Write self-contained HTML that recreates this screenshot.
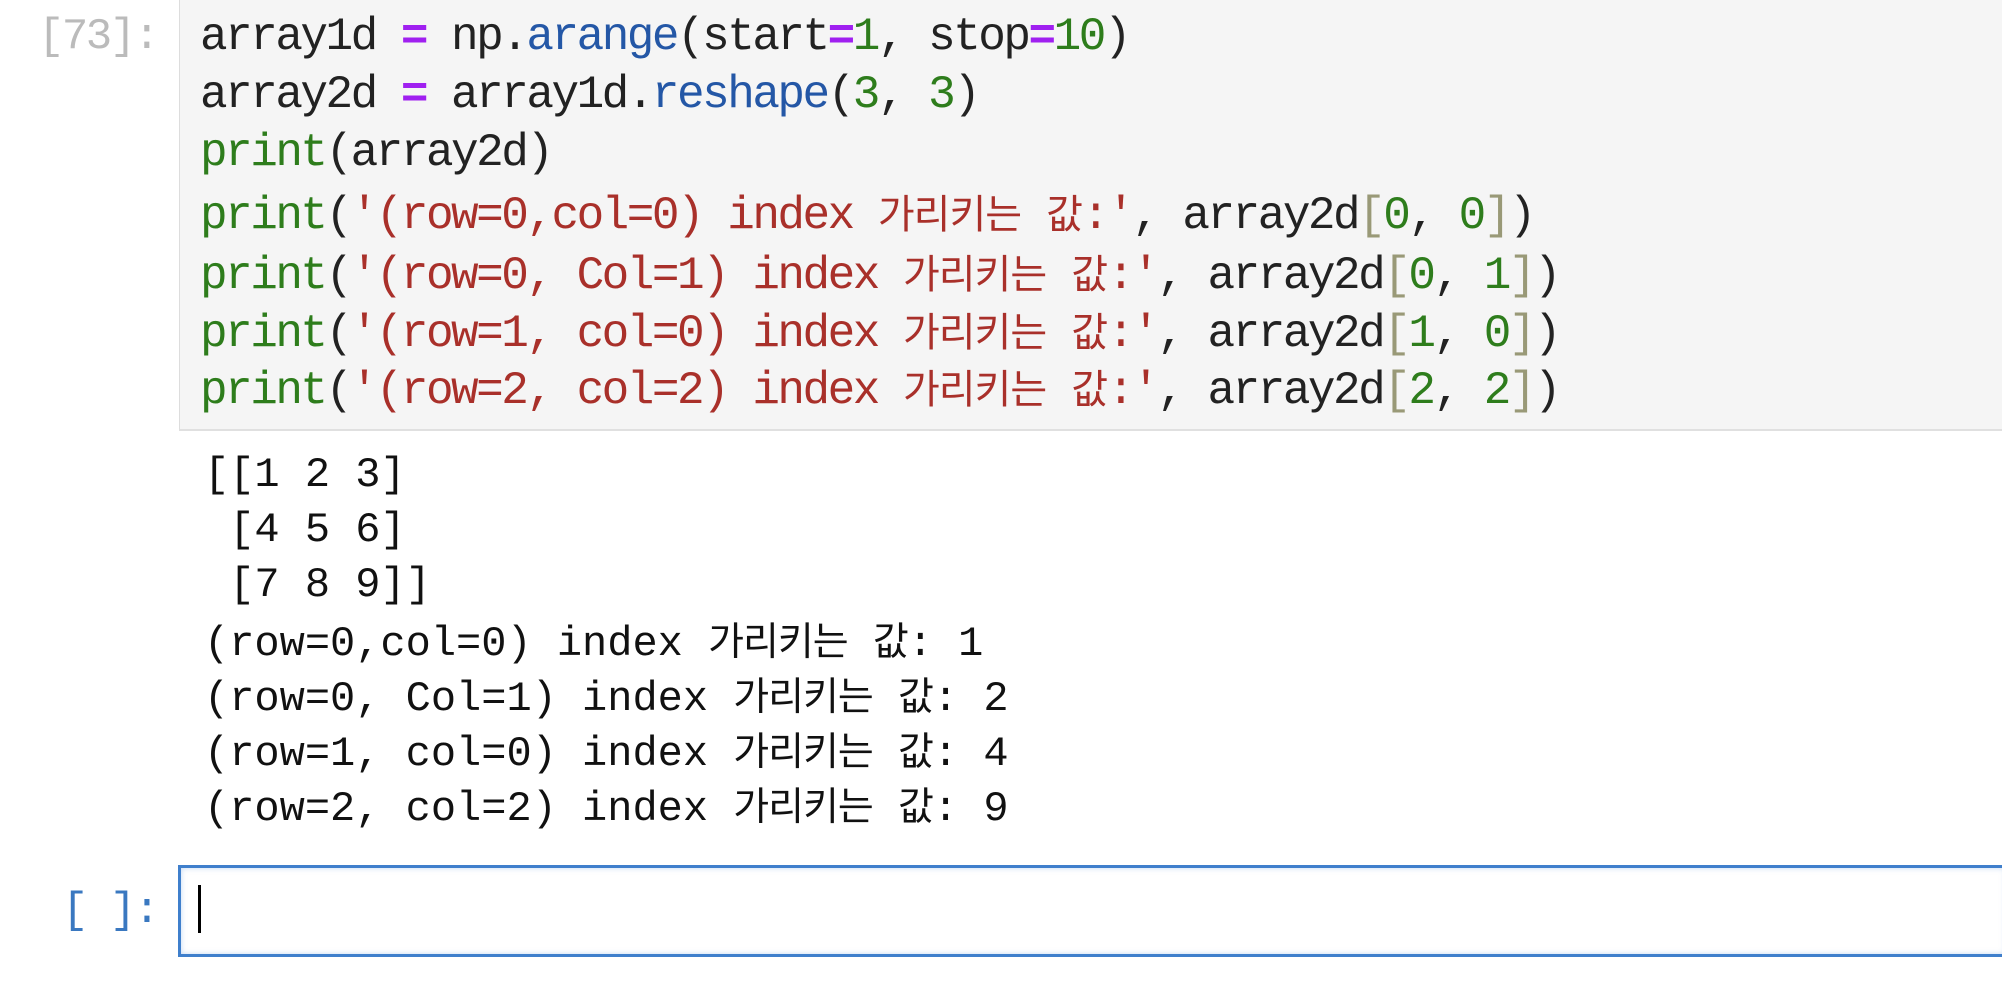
<!DOCTYPE html>
<html><head><meta charset="utf-8"><style>
body{margin:0;width:2002px;height:1007px;background:#fff;overflow:hidden;position:relative;font-family:"Liberation Mono","Noto Sans CJK KR",monospace;}
.l{position:absolute;white-space:pre;font-size:46px;line-height:58px;color:#222;letter-spacing:-2.5px;}
.o{position:absolute;white-space:pre;font-size:42px;line-height:55px;color:#111;left:204px;}
.k{font-family:"Noto Sans CJK KR",sans-serif;font-size:40px;letter-spacing:-1px;}
.o .k{font-size:39px;letter-spacing:-1px;}
.g{color:#2e7d1c}.r{color:#a9302a}.p{color:#a020f0;font-weight:bold}.b{color:#2457a6}.t{color:#999977}
#box{position:absolute;left:179px;top:-2px;width:1830px;height:433px;background:#f5f5f5;border:1px solid #ddd;box-sizing:border-box;border-bottom:2px solid #e0e0e0}
#in{position:absolute;left:178px;top:865px;width:1830px;height:92px;border:3px solid #3f7fcc;box-sizing:border-box;box-shadow:inset 0 0 6px rgba(80,140,220,.35)}
</style></head><body>
<div id="box"></div>
<div class="l" style="left:38px;top:8px;color:#bbb;font-size:44px">[73]:</div>
<div class="l" style="left:200px;top:8px">array1d <span class="p">=</span> np.<span class="b">arange</span>(start<span class="p">=</span><span class="g">1</span>, stop<span class="p">=</span><span class="g">10</span>)</div>
<div class="l" style="left:200px;top:66px">array2d <span class="p">=</span> array1d.<span class="b">reshape</span>(<span class="g">3</span>, <span class="g">3</span>)</div>
<div class="l" style="left:200px;top:124px"><span class="g">print</span>(array2d)</div>
<div class="l" style="left:200px;top:182px"><span class="g">print</span>(<span class="r">'(row=0,col=0) index <span class="k">가리키는</span> <span class="k">값</span>:'</span>, array2d<span class="t">[</span><span class="g">0</span>, <span class="g">0</span><span class="t">]</span>)</div>
<div class="l" style="left:200px;top:242px"><span class="g">print</span>(<span class="r">'(row=0, Col=1) index <span class="k">가리키는</span> <span class="k">값</span>:'</span>, array2d<span class="t">[</span><span class="g">0</span>, <span class="g">1</span><span class="t">]</span>)</div>
<div class="l" style="left:200px;top:300px"><span class="g">print</span>(<span class="r">'(row=1, col=0) index <span class="k">가리키는</span> <span class="k">값</span>:'</span>, array2d<span class="t">[</span><span class="g">1</span>, <span class="g">0</span><span class="t">]</span>)</div>
<div class="l" style="left:200px;top:357px"><span class="g">print</span>(<span class="r">'(row=2, col=2) index <span class="k">가리키는</span> <span class="k">값</span>:'</span>, array2d<span class="t">[</span><span class="g">2</span>, <span class="g">2</span><span class="t">]</span>)</div>
<div class="o" style="top:448px">[[1 2 3]</div>
<div class="o" style="top:503px"> [4 5 6]</div>
<div class="o" style="top:558px"> [7 8 9]]</div>
<div class="o" style="top:612px">(row=0,col=0) index <span class="k">가리키는</span> <span class="k">값</span>: 1</div>
<div class="o" style="top:667px">(row=0, Col=1) index <span class="k">가리키는</span> <span class="k">값</span>: 2</div>
<div class="o" style="top:722px">(row=1, col=0) index <span class="k">가리키는</span> <span class="k">값</span>: 4</div>
<div class="o" style="top:777px">(row=2, col=2) index <span class="k">가리키는</span> <span class="k">값</span>: 9</div>
<div class="l" style="left:62px;top:882px;color:#3a78c0;font-size:44px">[ ]:</div>
<div id="in"></div>
<div style="position:absolute;left:198px;top:885px;width:3px;height:48px;background:#000"></div>
</body></html>
